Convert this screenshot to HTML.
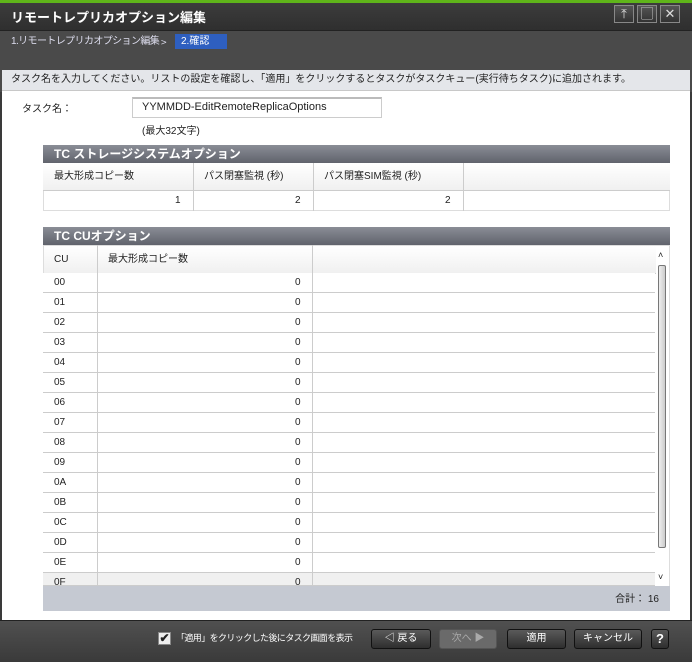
<html><head><style>
*{margin:0;padding:0;box-sizing:border-box}
body{width:692px;height:662px;background:#3a3a3a;font-family:"Liberation Sans","Noto Sans CJK JP",sans-serif;font-size:10px;position:relative;overflow:hidden;color:#222}
.a{position:absolute;white-space:nowrap}
.hdr{background:linear-gradient(#8a8d96,#60636c);color:#fff;font-weight:bold;font-size:12px;padding-left:11px;line-height:18px}
.btn{position:absolute;top:629px;height:20px;border:1px solid #111;border-radius:3px;background:linear-gradient(#5a5a5a,#2e2e2e);color:#fff;text-align:center;line-height:18px;font-size:10px}
.row{position:absolute;left:43px;width:612px;height:20px;border-bottom:1px solid #ccc;background:#fff;line-height:19px}
.row span{position:absolute}
.wb{position:absolute;top:5px;width:20px;height:18px;border:1px solid #888;background:linear-gradient(#555,#333);color:#ddd;text-align:center;font-size:13px;line-height:16px}
</style></head><body>
<div class="a" style="left:0;top:0;width:692px;height:3px;background:#5fb51a"></div>
<div class="a" style="left:0;top:3px;width:692px;height:37px;background:linear-gradient(#3c3c3c,#2a2a2a)"></div>
<div class="a" style="left:11px;top:7px;color:#fff;font-weight:bold;font-size:13px">リモートレプリカオプション編集</div>
<div class="wb" style="left:614px">⤒</div><div class="wb" style="left:637px">▢</div><div class="wb" style="left:660px">✕</div>
<div class="a" style="left:0;top:30px;width:692px;height:62px;background:#4a4a4a;border-top:1px solid #222"></div>
<div class="a" style="left:11px;top:35px;color:#dde;font-size:10px;letter-spacing:-0.6px;line-height:14px">1.リモートレプリカオプション編集</div>
<div class="a" style="left:161px;top:35px;color:#dde;font-size:10px;line-height:14px;font-family:'Noto Sans CJK JP',sans-serif">&gt;</div>
<div class="a" style="left:175px;top:34px;width:52px;height:15px;background:#2e5fc0;color:#fff;padding-left:6px;line-height:15px">2.確認</div>
<div class="a" style="left:2px;top:70px;width:688px;height:550px;background:#fff"></div>
<div class="a" style="left:2px;top:70px;width:688px;height:21px;background:#e4e6ea;border-bottom:1px solid #c8c8c8;padding-left:9px;line-height:20px">タスク名を入力してください。リストの設定を確認し、「適用」をクリックするとタスクがタスクキュー(実行待ちタスク)に追加されます。</div>
<div class="a" style="left:22px;top:100px">タスク名：</div>
<div class="a" style="left:132px;top:97px;width:250px;height:21px;border:1px solid #ccc;border-top:2px solid #bbb;padding-left:9px;line-height:17px;font-size:11px">YYMMDD-EditRemoteReplicaOptions</div>
<div class="a" style="left:142px;top:122px">(最大32文字)</div>

<div class="a hdr" style="left:43px;top:145px;width:627px">TC ストレージシステムオプション</div>
<div class="a" style="left:43px;top:163px;width:627px;height:48px;border:1px solid #ddd;background:#fff"></div>
<div class="a" style="left:43px;top:163px;width:627px;height:28px;background:linear-gradient(#fff,#f0f0f0);border-bottom:1px solid #ccc"></div>
<div class="a" style="left:193px;top:163px;width:1px;height:48px;background:#ccc"></div>
<div class="a" style="left:313px;top:163px;width:1px;height:48px;background:#ccc"></div>
<div class="a" style="left:463px;top:163px;width:1px;height:48px;background:#ccc"></div>
<div class="a" style="left:54px;top:170px;line-height:14px">最大形成コピー数</div>
<div class="a" style="left:204px;top:170px;line-height:14px">パス閉塞監視 (秒)</div>
<div class="a" style="left:324px;top:170px;line-height:14px">パス閉塞SIM監視 (秒)</div>
<div class="a" style="left:175px;top:194px;line-height:14px">1</div>
<div class="a" style="left:295px;top:194px;line-height:14px">2</div>
<div class="a" style="left:445px;top:194px;line-height:14px">2</div>

<div class="a hdr" style="left:43px;top:227px;width:627px">TC CUオプション</div>
<div class="a" style="left:43px;top:245px;width:627px;height:366px;background:#fff;border:1px solid #ddd;overflow:hidden">
<div class="a" style="left:0;top:0;width:612px;height:28px;background:linear-gradient(#fff,#f0f0f0);border-bottom:1px solid #ccc"></div>
<div class="a" style="left:10px;top:7px;line-height:14px">CU</div><div class="a" style="left:64px;top:7px;line-height:14px">最大形成コピー数</div>
<div class="a" style="left:612px;top:0;width:14px;height:340px;background:#fff"></div>
<div class="a" style="left:614px;top:4px;font-size:9px">˄</div>
<div class="a" style="left:614px;top:19px;width:8px;height:283px;border:1px solid #777;border-radius:2px;background:linear-gradient(90deg,#eee,#ccc)"></div>
<div class="a" style="left:614px;top:326px;font-size:9px">˅</div>
</div>
<div id="rows"></div>
<div class="a" style="left:43px;top:586px;width:627px;height:25px;background:#c5c9d2;text-align:right;padding-right:11px;line-height:28px">合計： 16</div>
<div class="a" style="left:97px;top:273px;width:1px;height:313px;background:#ccc"></div>
<div class="a" style="left:312px;top:245px;width:1px;height:341px;background:#ccc"></div>
<div class="a" style="left:97px;top:245px;width:1px;height:28px;background:#ccc"></div>

<div class="a" style="left:0;top:620px;width:692px;height:42px;background:linear-gradient(#505050,#3a3a3a);border-top:1px solid #222"></div>
<div class="a" style="left:158px;top:632px;width:13px;height:13px;background:#eee;border:1px solid #888;font-size:12px;line-height:11px;text-align:center;font-weight:bold">✔</div>
<div class="a" style="left:176px;top:632px;color:#fff;font-size:9px;letter-spacing:-0.6px;line-height:12px">「適用」をクリックした後にタスク画面を表示</div>
<div class="btn" style="left:371px;width:60px">◁ 戻る</div>
<div class="btn" style="left:439px;width:58px;background:#6a6a6a;color:#aaa;border-color:#555">次へ ▶</div>
<div class="btn" style="left:507px;width:59px">適用</div>
<div class="btn" style="left:574px;width:68px">キャンセル</div>
<div class="btn" style="left:651px;width:18px;font-weight:bold;font-size:13px">?</div>
<script>
var h='',c=['00','01','02','03','04','05','06','07','08','09','0A','0B','0C','0D','0E','0F'];
for(var i=0;i<16;i++){var t=273+i*20;if(t>=586)break;var hh=Math.min(20,586-t);
h+='<div class="row" style="top:'+t+'px;height:'+hh+'px;overflow:hidden;'+(i==15?'background:#f0f0f0':'')+'"><span style="left:11px">'+c[i]+'</span><span style="left:252px">0</span></div>';}
document.getElementById('rows').innerHTML=h;
</script>
</body></html>
